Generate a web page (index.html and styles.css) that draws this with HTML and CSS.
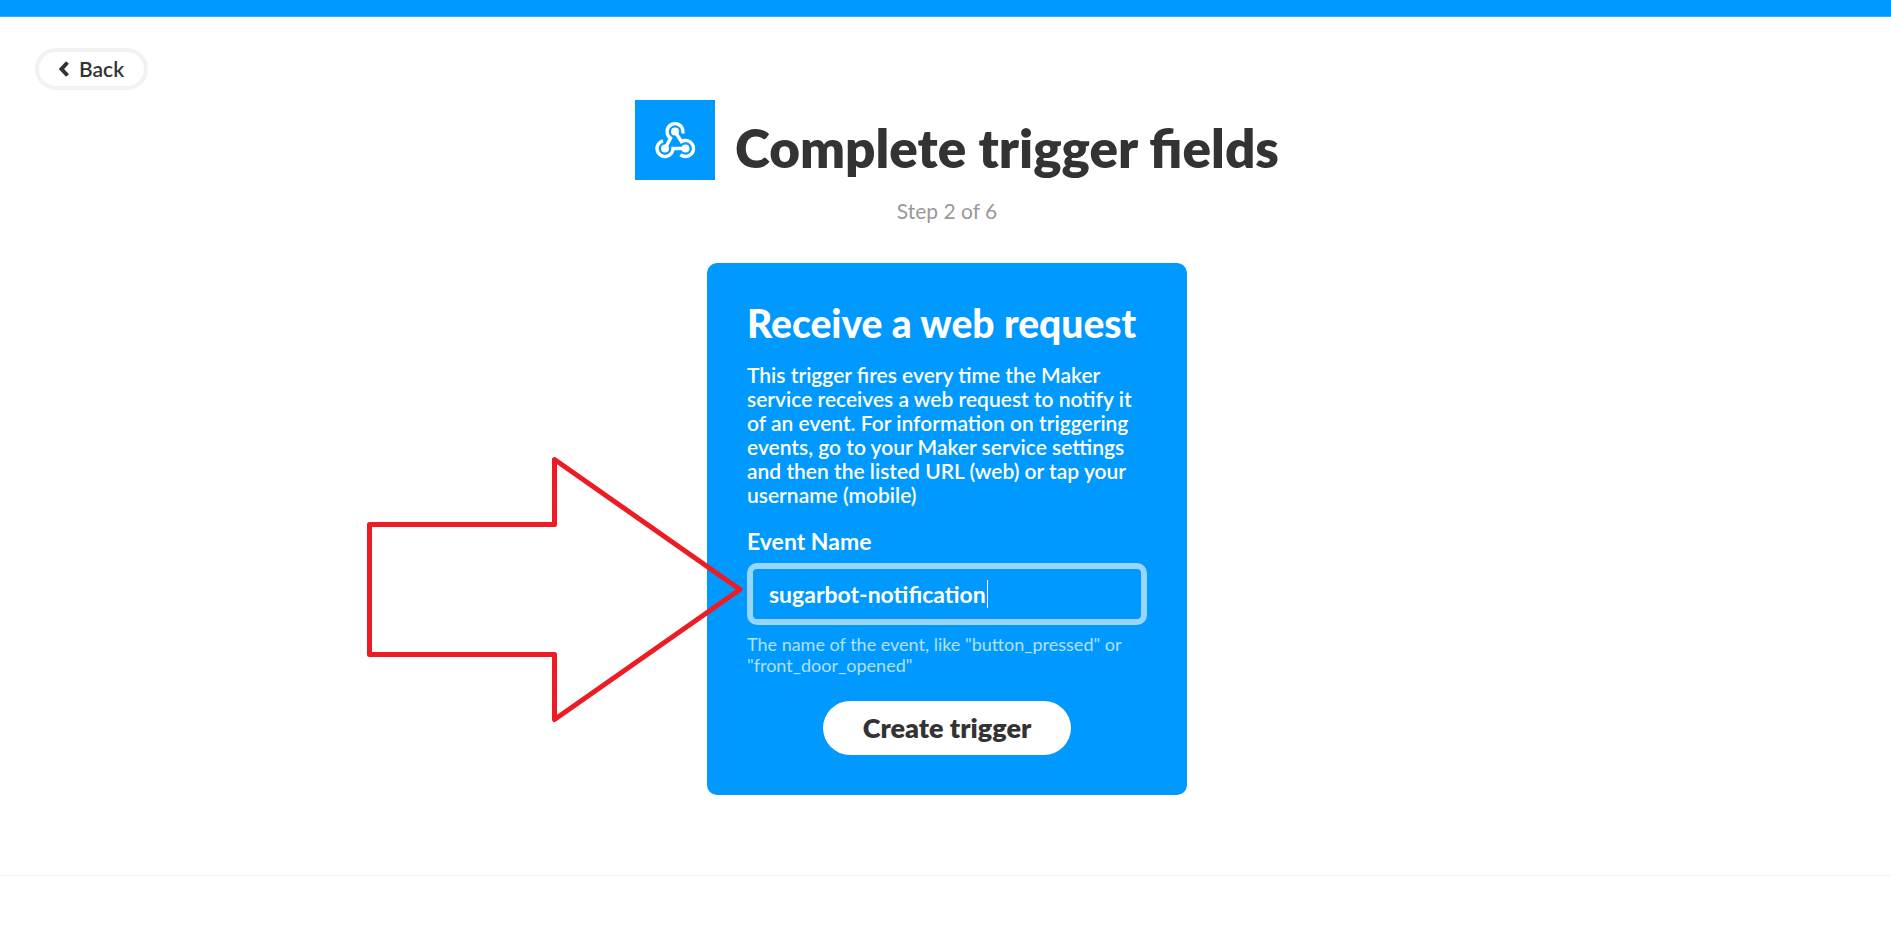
FILE: index.html
```html
<!DOCTYPE html>
<html lang="en">
<head>
<meta charset="utf-8">
<title>Complete trigger fields</title>
<link rel="stylesheet" href="styles.css">
</head>
<body>
<div class="topbar"></div>
<main class="page">
  <button class="back" type="button">
    <svg class="back-icon" viewBox="0 0 10 16" aria-hidden="true"><path d="M8.5 1.5 2.5 8l6 6.5"/></svg>
    Back
  </button>
  <header class="heading">
    <svg class="service-icon" viewBox="0 0 80 80" aria-hidden="true">
      <rect width="80" height="80"/>
      <path d="M47.8 33.5A8 8 0 1 0 35.5 38.2L30 48.5"/>
      <path d="M40 31.5 46.5 41.6A8 8 0 1 1 45.4 54.6"/>
      <path d="M28 40.8A8 8 0 1 0 38 48.5H50.5"/>
      <circle cx="40" cy="31.5" r="4"/>
      <circle cx="30" cy="48.5" r="4"/>
      <circle cx="50.5" cy="48.5" r="4"/>
    </svg>
    <h1 class="title">Complete trigger fields</h1>
  </header>
  <p class="step">Step 2 of 6</p>
  <form class="card">
    <h2 class="card-title">Receive a web request</h2>
    <p class="description">This trigger fires every time the Maker<br>service receives a web request to notify it<br>of an event. For information on triggering<br>events, go to your Maker service settings<br>and then the listed URL (web) or tap your<br>username (mobile)</p>
    <label class="label" for="event">Event Name</label>
    <div class="field">
      <input class="input" id="event" type="text" value="sugarbot-notification" aria-describedby="hint">
      <span class="caret"></span>
    </div>
    <p class="hint" id="hint">The name of the event, like "button_pressed" or<br>"front_door_opened"</p>
    <button class="submit" type="button">Create trigger</button>
    <svg class="arrow" viewBox="0 0 376 266" aria-hidden="true"><path d="M2.5 67.5H187.5V2.5L373 132.5 187.5 262.5V197.5H2.5Z"/></svg>
  </form>
</main>
<footer class="footer"></footer>
</body>
</html>
```
FILE: styles.css
```css
* { box-sizing: border-box; }
body {
  margin: 0;
  background: #fff;
  color: #333;
  font-family: Lato, "Open Sans", sans-serif;
}
h1, h2, p { margin: 0; }
button, input { font-family: inherit; color: inherit; }
.topbar { height: 17px; background: #09f; border-bottom: 1px solid #33adff; }
.page {
  display: flex;
  flex-direction: column;
  align-items: center;
  padding: 31px 32px 80px 35px;
}
.back {
  align-self: flex-start;
  display: flex;
  align-items: center;
  gap: 10px;
  height: 42px;
  padding: 0 20px;
  border: 4px solid #f2f2f2;
  border-radius: 21px;
  background: #fff;
  font-size: 21px;
  line-height: 24px;
  font-weight: 600;
}
.back-icon { width: 10px; height: 16px; fill: none; stroke: #333; stroke-width: 4; }
.heading { display: flex; gap: 20px; margin-top: 10px; padding-left: 20px; }
.service-icon { width: 80px; height: 80px; fill: none; stroke: #fff; stroke-width: 3.4; }
.service-icon rect { fill: #09f; stroke: none; }
.service-icon circle { fill: #fff; stroke: none; }
.title { padding-top: 18px; font-size: 53px; line-height: 60px; font-weight: 800; white-space: nowrap; }
.step { margin-top: 19px; font-size: 21px; line-height: 24px; color: #999; }
.card {
  position: relative;
  display: flex;
  flex-direction: column;
  width: 480px;
  margin-top: 40px;
  padding: 40px;
  border-radius: 10px;
  background: #09f;
  color: #fff;
}
.card-title { font-size: 39px; line-height: 40px; font-weight: 900; white-space: nowrap; }
.description { margin-top: 20px; font-size: 21px; line-height: 24px; font-weight: 600; white-space: nowrap; }
.label { margin-top: 20px; font-size: 23px; line-height: 28px; font-weight: 700; }
.field { position: relative; margin-top: 8px; }
.input {
  display: block;
  width: 100%;
  height: 62px;
  padding: 0 16px;
  border: 6px solid #99d6ff;
  border-radius: 10px;
  background: #09f;
  font-size: 23px;
  font-weight: 700;
  outline: none;
}
.caret { position: absolute; left: 240px; top: 17px; width: 1px; height: 28px; background: #fff; }
.hint { margin-top: 9px; font-size: 18px; line-height: 21px; color: #b3e0ff; white-space: nowrap; }
.submit {
  align-self: center;
  height: 54px;
  margin-top: 25px;
  padding: 0 40px 2px;
  border: 0;
  border-radius: 27px;
  background: #fff;
  color: #333;
  font-size: 27px;
  font-weight: 800;
}
.arrow {
  position: absolute;
  left: -340px;
  top: 194px;
  width: 376px;
  height: 266px;
  fill: none;
  stroke: #ed1c24;
  stroke-width: 5;
  stroke-linejoin: round;
  pointer-events: none;
}
.footer { border-top: 1px solid #f2f2f2; }
```
